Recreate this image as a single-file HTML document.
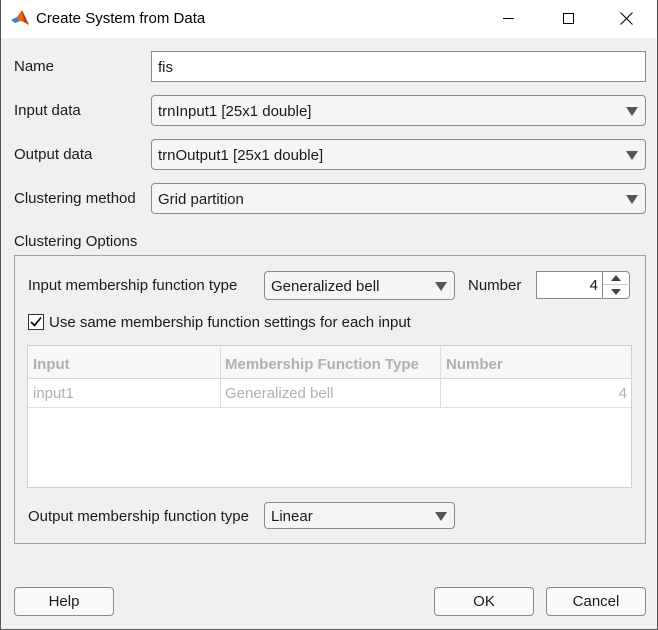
<!DOCTYPE html><html><head><style>
*{box-sizing:border-box}
body{margin:0;width:658px;height:630px;background:#f0f0f0;font-family:"Liberation Sans",Arial,sans-serif;font-size:15px;color:#1a1a1a;position:relative;overflow:hidden}
.a{position:absolute}
.title{left:0;top:0;width:658px;height:38px;background:#fff}
.lbl{position:absolute;line-height:18px}
.dd{position:absolute;border:1px solid #8a8a8a;border-radius:4px;background:#f5f5f5;padding-left:6px;padding-top:1px;display:flex;align-items:center}
.dd:after{content:"";position:absolute;right:7px;top:50%;margin-top:-4px;border-left:6px solid transparent;border-right:6px solid transparent;border-top:9px solid #555}
.btn{position:absolute;border:1px solid #8a8a8a;border-radius:4px;background:#fafafa;text-align:center;line-height:27px;height:29px}
.g{color:#b0b0b0}
</style></head><body>
<div class="a title"></div>
<div class="a" style="left:0;top:0;width:1px;height:630px;background:#555"></div>
<div class="a" style="left:657px;top:0;width:1px;height:630px;background:#555"></div>
<div class="a" style="left:0;top:629px;width:658px;height:1px;background:#555"></div>
<svg class="a" style="left:10px;top:9px" width="20" height="18" viewBox="0 0 20 18"><path d="M1 11 L7 8 L10 12 L5 14Z" fill="#3a7ec4"/><path d="M7 8 L12 1 L19 16 L14 13 L10 12Z" fill="#e06a1c"/><path d="M12 1 L14 13 L19 16Z" fill="#b83a10"/></svg>
<div class="lbl" style="left:36px;top:10px;font-size:15px;color:#000">Create System from Data</div>
<div class="a" style="left:503px;top:18px;width:11px;height:1px;background:#000"></div>
<div class="a" style="left:563px;top:13px;width:11px;height:11px;border:1px solid #000"></div>
<svg class="a" style="left:620px;top:12px" width="13" height="13"><path d="M0.5 0.5L12.5 12.5M12.5 0.5L0.5 12.5" stroke="#000"/></svg>

<div class="lbl" style="left:14px;top:58px">Name</div>
<div class="a" style="left:151px;top:51px;width:495px;height:31px;border:1px solid #8a8a8a;background:#fff;padding:7px 6px">fis</div>
<div class="lbl" style="left:14px;top:102px">Input data</div>
<div class="dd" style="left:151px;top:95px;width:495px;height:31px">trnInput1 [25x1 double]</div>
<div class="lbl" style="left:14px;top:146px">Output data</div>
<div class="dd" style="left:151px;top:139px;width:495px;height:31px">trnOutput1 [25x1 double]</div>
<div class="lbl" style="left:14px;top:190px">Clustering method</div>
<div class="dd" style="left:151px;top:183px;width:495px;height:31px">Grid partition</div>
<div class="lbl" style="left:14px;top:233px">Clustering Options</div>
<div class="a" style="left:14px;top:255px;width:632px;height:289px;border:1px solid #a0a0a0"></div>
<div class="lbl" style="left:28px;top:277px">Input membership function type</div>
<div class="dd" style="left:264px;top:271px;width:191px;height:29px">Generalized bell</div>
<div class="lbl" style="left:468px;top:277px">Number</div>
<div class="a" style="left:536px;top:271px;width:94px;height:28px;border:1px solid #8a8a8a;border-radius:0 4px 4px 0;background:#fff"></div>
<div class="lbl" style="left:580px;top:277px;width:18px;text-align:right">4</div>
<div class="a" style="left:602px;top:271px;width:1px;height:28px;background:#8a8a8a"></div>
<div class="a" style="left:603px;top:284px;width:27px;height:1px;background:#ccc"></div>
<div class="a" style="left:611px;top:275px;border-left:5px solid transparent;border-right:5px solid transparent;border-bottom:6px solid #444"></div>
<div class="a" style="left:611px;top:289px;border-left:5px solid transparent;border-right:5px solid transparent;border-top:6px solid #444"></div>
<div class="a" style="left:28px;top:314px;width:16px;height:16px;border:1px solid #333;background:#fff"></div>
<svg class="a" style="left:30px;top:316px" width="12" height="12"><path d="M1 6 L4.5 9.5 L11 1.5" stroke="#000" stroke-width="1.6" fill="none"/></svg>
<div class="lbl" style="left:49px;top:314px">Use same membership function settings for each input</div>
<div class="a" style="left:27px;top:345px;width:605px;height:143px;border:1px solid #d0d0d0;background:#fff"></div>
<div class="a" style="left:28px;top:346px;width:603px;height:33px;background:#f7f7f7;border-bottom:1px solid #d8d8d8"></div>
<div class="a" style="left:28px;top:407px;width:603px;height:1px;background:#e0e0e0"></div>
<div class="a" style="left:220px;top:346px;width:1px;height:61px;background:#ddd"></div>
<div class="a" style="left:440px;top:346px;width:1px;height:61px;background:#ddd"></div>
<div class="lbl g" style="left:33px;top:356px;font-weight:bold">Input</div>
<div class="lbl g" style="left:225px;top:356px;font-weight:bold">Membership Function Type</div>
<div class="lbl g" style="left:446px;top:356px;font-weight:bold">Number</div>
<div class="lbl g" style="left:33px;top:385px">input1</div>
<div class="lbl g" style="left:225px;top:385px">Generalized bell</div>
<div class="lbl g" style="left:610px;top:385px;width:17px;text-align:right">4</div>
<div class="lbl" style="left:28px;top:508px">Output membership function type</div>
<div class="dd" style="left:264px;top:502px;width:191px;height:27px">Linear</div>
<div class="btn" style="left:14px;top:587px;width:100px">Help</div>
<div class="btn" style="left:434px;top:587px;width:100px">OK</div>
<div class="btn" style="left:546px;top:587px;width:100px">Cancel</div>
</body></html>
